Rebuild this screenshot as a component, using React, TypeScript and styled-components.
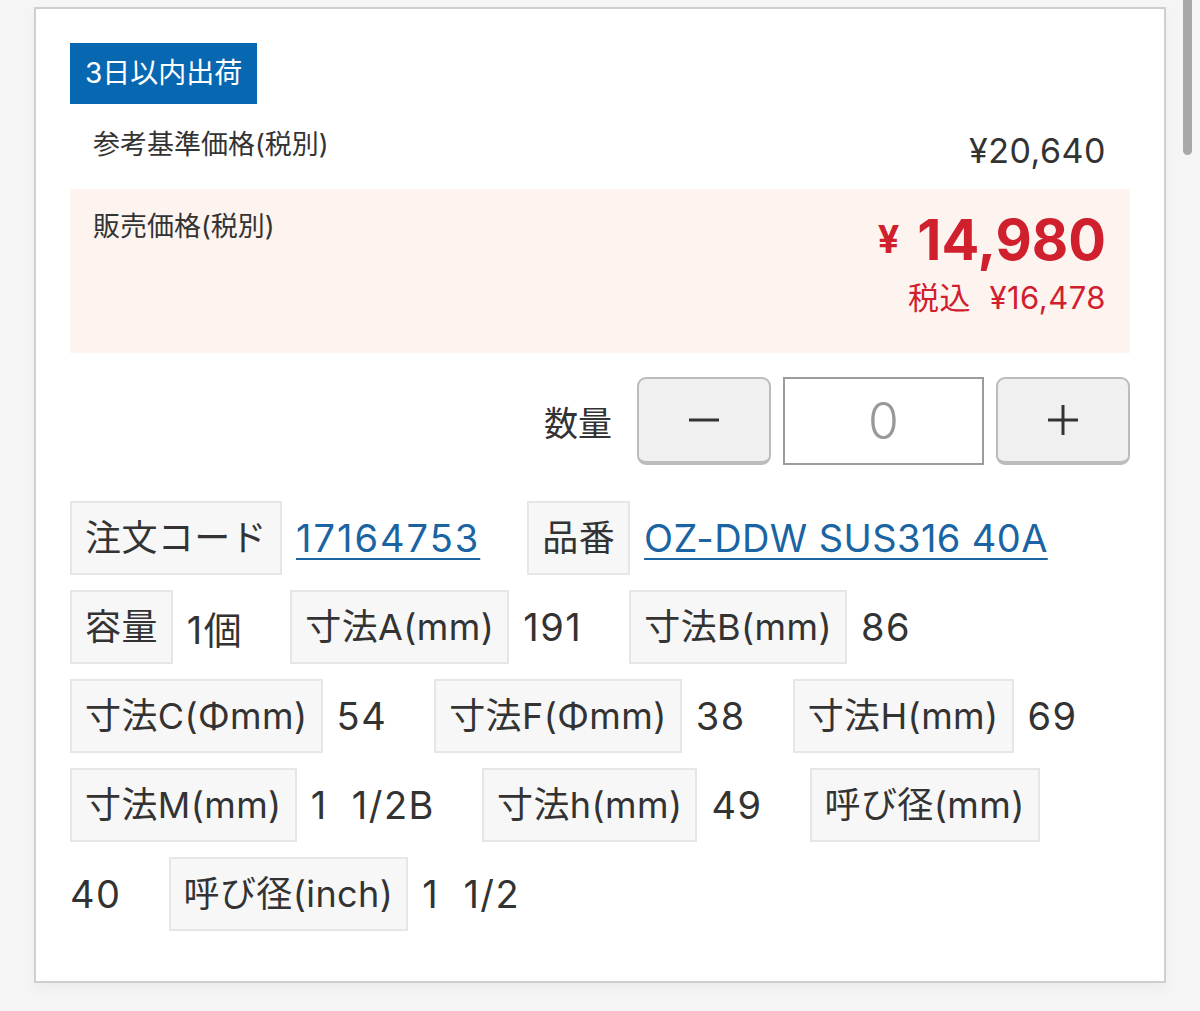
import { Fragment } from "react";
import styled, { createGlobalStyle } from "styled-components";

const GlobalStyle = createGlobalStyle`
  body {
    margin: 0;
    background: #f5f5f5;
    font-family: Inter, "Noto Sans CJK JP", sans-serif;
    color: #333;
  }
`;

const specs: { label: string; value: string; link?: boolean }[] = [
  { label: "注文コード", value: "17164753", link: true },
  { label: "品番", value: "OZ-DDW SUS316 40A", link: true },
  { label: "容量", value: "1個" },
  { label: "寸法A(mm)", value: "191" },
  { label: "寸法B(mm)", value: "86" },
  { label: "寸法C(Φmm)", value: "54" },
  { label: "寸法F(Φmm)", value: "38" },
  { label: "寸法H(mm)", value: "69" },
  { label: "寸法M(mm)", value: "1 1/2B" },
  { label: "寸法h(mm)", value: "49" },
  { label: "呼び径(mm)", value: "40" },
  { label: "呼び径(inch)", value: "1 1/2" },
];

const MinusIcon = () => (
  <svg width="32" height="32" viewBox="0 0 32 32">
    <line x1="1" y1="16" x2="31" y2="16" stroke="#333" strokeWidth="3" />
  </svg>
);

const PlusIcon = () => (
  <svg width="32" height="32" viewBox="0 0 32 32">
    <line x1="1" y1="16" x2="31" y2="16" stroke="#333" strokeWidth="3" />
    <line x1="16" y1="1" x2="16" y2="31" stroke="#333" strokeWidth="3" />
  </svg>
);

export default function App() {
  return (
    <>
      <GlobalStyle />
      <Page>
        <Card>
          <Badge>3日以内出荷</Badge>
          <RefRow>
            <RefLabel>参考基準価格(税別)</RefLabel>
            <RefPrice>¥20,640</RefPrice>
          </RefRow>
          <SaleBox>
            <SaleLabel>販売価格(税別)</SaleLabel>
            <SalePrices>
              <BigPrice>
                <Yen>¥</Yen>14,980
              </BigPrice>
              <TaxPrice>税込&nbsp; ¥16,478</TaxPrice>
            </SalePrices>
          </SaleBox>
          <QtyRow>
            <QtyLabel>数量</QtyLabel>
            <StepButton aria-label="減らす">
              <MinusIcon />
            </StepButton>
            <QtyInput>0</QtyInput>
            <StepButton aria-label="増やす">
              <PlusIcon />
            </StepButton>
          </QtyRow>
          <SpecList>
            {specs.map((s) => (
              <Fragment key={s.label}>
                <SpecLabel>{s.label}</SpecLabel>
                {s.link ? (
                  <SpecLink href="#" $numeric={/^\d+$/.test(s.value)}>
                    {s.value}
                  </SpecLink>
                ) : (
                  <SpecValue>{s.value}</SpecValue>
                )}
              </Fragment>
            ))}
          </SpecList>
        </Card>
      </Page>
      <ScrollThumb />
    </>
  );
}

const Page = styled.div`
  padding: 7px 34px 30px 34px;
`;

const Card = styled.div`
  background: #fff;
  border: 2px solid #cfcfcf;
  box-shadow: 0 6px 12px rgba(0, 0, 0, 0.04);
  padding: 34px 34px 50px 34px;
`;

const Badge = styled.div`
  display: inline-block;
  background: #0867b1;
  color: #fff;
  font-size: 28px;
  height: 61px;
  line-height: 61px;
  padding: 0 15px;
`;

const RefRow = styled.div`
  display: flex;
  justify-content: space-between;
  align-items: flex-start;
  margin-top: 21px;
  padding: 0 24px 0 23px;
`;

const RefLabel = styled.div`
  font-size: 27px;
  line-height: 40px;
`;

const RefPrice = styled.div`
  font-size: 34px;
  letter-spacing: 0.5px;
  line-height: 48px;
  margin-top: 2px;
`;

const SaleBox = styled.div`
  display: flex;
  justify-content: space-between;
  align-items: flex-start;
  box-sizing: border-box;
  height: 164px;
  margin-top: 14px;
  padding: 18px 24px 0 23px;
  background: #fdf4f0;
`;

const SaleLabel = styled.div`
  font-size: 27px;
  line-height: 40px;
`;

const SalePrices = styled.div`
  display: flex;
  flex-direction: column;
  align-items: flex-end;
  color: #d0202e;
`;

const BigPrice = styled.div`
  font-size: 56px;
  font-weight: 700;
  line-height: 64px;
`;

const Yen = styled.span`
  font-size: 38px;
  margin-right: 18px;
  vertical-align: 7px;
`;

const TaxPrice = styled.div`
  font-size: 31px;
  letter-spacing: 0.5px;
  line-height: 42px;
  margin-top: 5px;
`;

const QtyRow = styled.div`
  display: flex;
  justify-content: flex-end;
  align-items: center;
  gap: 12px;
  margin-top: 24px;
`;

const QtyLabel = styled.div`
  font-size: 34px;
  margin-right: 13px;
`;

const StepButton = styled.div`
  box-sizing: border-box;
  width: 134px;
  height: 88px;
  display: flex;
  align-items: center;
  justify-content: center;
  background: #f0f0f0;
  border: 2px solid #bcbcbc;
  border-bottom-width: 4px;
  border-radius: 9px;
`;

const QtyInput = styled.div`
  box-sizing: border-box;
  width: 201px;
  height: 88px;
  display: flex;
  align-items: center;
  justify-content: center;
  border: 2px solid #9c9c9c;
  font-size: 50px;
  font-weight: 300;
  color: #999;
`;

const SpecList = styled.div`
  display: flex;
  flex-wrap: wrap;
  align-items: center;
  row-gap: 15px;
  margin-top: 36px;
`;

const SpecLabel = styled.div`
  box-sizing: border-box;
  height: 74px;
  line-height: 70px;
  padding: 0 13px;
  margin-right: 14px;
  background: #f7f7f7;
  border: 2px solid #e6e6e6;
  font-size: 36px;
  letter-spacing: 0.4px;
  white-space: nowrap;
`;

const SpecValue = styled.div`
  font-size: 38px;
  letter-spacing: 1.5px;
  word-spacing: 12px;
  margin-right: 47px;
  white-space: nowrap;
`;

const SpecLink = styled.a<{ $numeric?: boolean }>`
  font-size: 38px;
  letter-spacing: ${(p) => (p.$numeric ? "2px" : "0.4px")};
  margin-right: 47px;
  white-space: nowrap;
  color: #1a64a3;
  text-decoration: underline;
  text-decoration-thickness: 2px;
  text-underline-offset: 6px;
`;

const ScrollThumb = styled.div`
  position: fixed;
  top: -6px;
  right: 8px;
  width: 9px;
  height: 161px;
  border-radius: 5px;
  background: #a8a8a8;
`;
